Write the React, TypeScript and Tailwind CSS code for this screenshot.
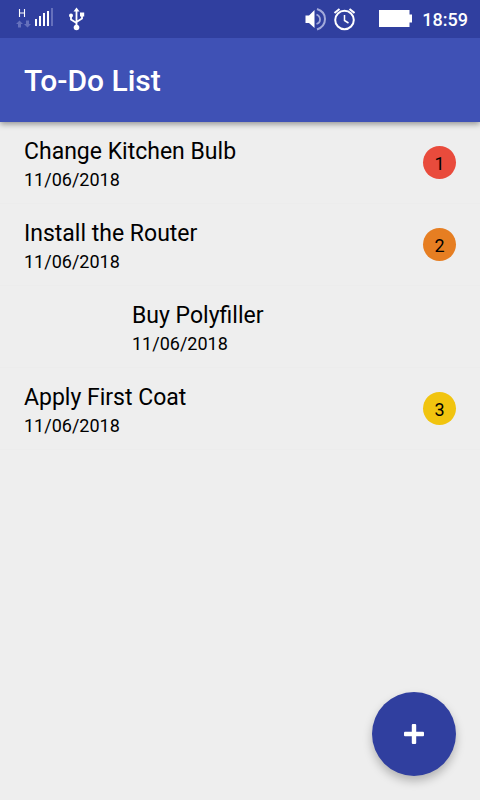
import React from "react";

type Task = {
  title: string;
  date: string;
  priority?: number;
  color?: string;
  swiped?: boolean;
};

const tasks: Task[] = [
  { title: "Change Kitchen Bulb", date: "11/06/2018", priority: 1, color: "bg-[#e94b3c]" },
  { title: "Install the Router", date: "11/06/2018", priority: 2, color: "bg-[#e67e22]" },
  { title: "Buy Polyfiller", date: "11/06/2018", swiped: true },
  { title: "Apply First Coat", date: "11/06/2018", priority: 3, color: "bg-[#f1c40f]" },
];

function SignalIcon() {
  return (
    <svg width="40" height="22" viewBox="0 0 40 22" aria-label="Mobile signal" role="img">
      <path d="M3.500 1v8M8.500 1v8M3.500 5h5" stroke="#fff" strokeWidth="1.100" fill="none" />
      <path d="M3.500 12.500L0 16h2v3.500h3V16h2zM11.500 19.500L15 16h-2v-3.500h-3V16H8z" fill="#6570bc" />
      <path d="M19 11h2v7h-2zM23 8h2v10h-2zM27 5h2v13h-2zM31 3h2v15h-2z" fill="#fff" />
      <path d="M35 0h2v18h-2z" fill="#6570bc" />
    </svg>
  );
}

function UsbIcon() {
  return (
    <svg width="18" height="24" viewBox="0 0 18 24" aria-label="USB connected" role="img">
      <path d="M8.500 19V3M8.500 16L3 12.500V8M8.500 15L14 11.500V7" stroke="#fff" strokeWidth="1.800" fill="none" />
      <path d="M8.500 0.500L11.500 4.500h-6z" fill="#fff" />
      <circle cx="8.500" cy="20.500" r="2.800" fill="#fff" />
      <circle cx="3" cy="8.500" r="2" fill="#fff" />
      <path d="M12 5.500h4.200v4H12z" fill="#fff" />
    </svg>
  );
}

function VolumeIcon() {
  return (
    <svg width="22" height="24" viewBox="0 0 22 24" aria-label="Volume" role="img">
      <path d="M0.500 8.500h3.500L9.500 3v18L4 16H0.500z" fill="#fff" />
      <path d="M11.500 7.500Q15 9 15 12.500T11.500 17" stroke="#a3aadb" strokeWidth="1.800" fill="none" />
      <path d="M12 2Q20 4.500 20 12T12 22.500" stroke="#a3aadb" strokeWidth="2" fill="none" />
    </svg>
  );
}

function AlarmIcon() {
  return (
    <svg width="22" height="24" viewBox="0 0 22 24" aria-label="Alarm set" role="img">
      <circle cx="11.500" cy="13" r="9.300" stroke="#fff" strokeWidth="2" fill="none" />
      <path d="M1.500 6L6.500 2M21.500 6L16.500 2" stroke="#fff" strokeWidth="2" />
      <path d="M11.500 8v5.500l4 2.500" stroke="#fff" strokeWidth="1.500" fill="none" />
    </svg>
  );
}

function BatteryIcon() {
  return (
    <svg width="33" height="18" viewBox="0 0 33 18" aria-label="Battery full" role="img">
      <path d="M0 0h30.500v4.500H33v8h-2.500V17H0z" fill="#fff" />
    </svg>
  );
}

function StatusBar() {
  return (
    <div className="flex h-[38px] items-center justify-between bg-[#303f9f] pr-3 pl-4">
      <div className="flex items-center gap-3">
        <SignalIcon />
        <UsbIcon />
      </div>
      <div className="flex items-center">
        <VolumeIcon />
        <span className="ml-1.5 flex"><AlarmIcon /></span>
        <span className="ml-6 flex"><BatteryIcon /></span>
        <time className="ml-2.5 pt-0.5 text-lg font-medium text-white">18:59</time>
      </div>
    </div>
  );
}

function TaskRow({ task }: { task: Task }) {
  return (
    <li className={`flex h-[82px] items-center justify-between border-b border-[#ececec] pr-6 ${task.swiped ? "pl-[132px]" : "pl-6"}`}>
      <div className="pt-0.5">
        <h2 className="text-[23px] leading-8 font-normal">{task.title}</h2>
        <p className="text-lg leading-6">{task.date}</p>
      </div>
      {task.priority && (
        <span className={`flex size-[33px] items-center justify-center rounded-full pt-0.5 text-lg leading-6 ${task.color}`}>
          {task.priority}
        </span>
      )}
    </li>
  );
}

export default function App() {
  return (
    <div className="flex min-h-screen flex-col bg-[#eeeeee] font-[Roboto,sans-serif] text-black">
      <header className="shadow-[0_2px_6px_rgba(0,0,0,0.4)]">
        <StatusBar />
        <div className="flex h-[84px] items-center bg-[#3f51b5] px-6">
          <h1 className="pt-0.5 text-[30px] leading-9 font-medium text-white">To-Do List</h1>
        </div>
      </header>
      <main className="flex flex-1 flex-col">
        <ul>
          {tasks.map((task) => (
            <TaskRow key={task.title} task={task} />
          ))}
        </ul>
      </main>
      <button
        type="button"
        aria-label="Add task"
        className="fixed right-6 bottom-6 flex size-[84px] items-center justify-center rounded-full bg-[#303f9f] shadow-[0_5px_10px_rgba(0,0,0,0.25)]"
      >
        <svg width="20" height="20" viewBox="0 0 20 20" aria-hidden="true">
          <rect x="7.800" y="0" width="4.400" height="20" rx="1" fill="#fff" />
          <rect x="0" y="7.800" width="20" height="4.400" rx="1" fill="#fff" />
        </svg>
      </button>
    </div>
  );
}
